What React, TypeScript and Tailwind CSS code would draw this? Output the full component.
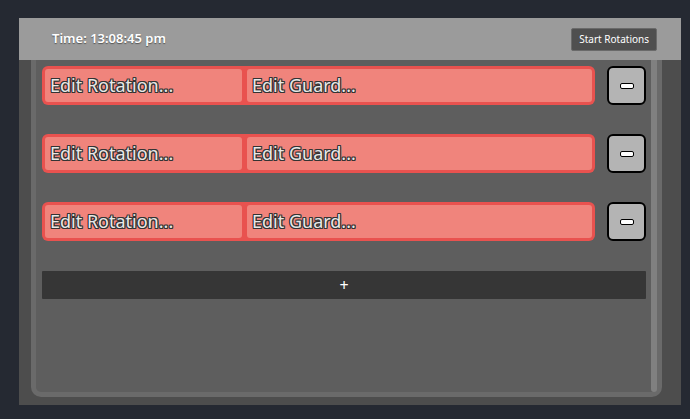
import React from 'react';

const outline =
  '[text-shadow:-1px_-1px_0_#333,1px_-1px_0_#333,-1px_1px_0_#333,1px_1px_0_#333,0_1px_0_#333,0_-1px_0_#333,1px_0_0_#333,-1px_0_0_#333]';

function RotationRow() {
  return (
    <div className="flex items-center gap-[12px]">
      <div className="flex h-[39px] flex-1 gap-[5px] rounded-[6px] bg-[#e9524f] p-[3px]">
        <div
          className={`flex w-[197px] items-center rounded-[3px] bg-[#f0847c] pl-[5px] text-[18px] text-[#e8e8e8] ${outline}`}
        >
          Edit Rotation...
        </div>
        <div
          className={`flex flex-1 items-center rounded-[3px] bg-[#f0847c] pl-[5px] text-[18px] text-[#e8e8e8] ${outline}`}
        >
          Edit Guard...
        </div>
      </div>
      <button className="flex h-[39px] w-[39px] items-center justify-center rounded-[6px] border-2 border-black bg-[#b4b4b4]">
        <span className="block h-[6px] w-[14px] rounded-[2px] border-[1.5px] border-black bg-white" />
      </button>
    </div>
  );
}

export default function App() {
  return (
    <div
      className="h-[419px] w-[690px] bg-[#252932] pl-[19px] pt-[18px]"
      style={{ fontFamily: '"Noto Sans", sans-serif' }}
    >
      <div className="flex h-[387px] w-[662px] flex-col bg-[#4d4d4d]">
        {/* Header */}
        <div className="flex h-[42px] items-center justify-between bg-[#9b9b9b] pl-[33px] pr-[24px]">
          <span className="text-[13px] font-semibold text-white [text-shadow:0_1px_1px_#555]">
            Time: 13:08:45 pm
          </span>
          <button className="flex h-[23px] items-center rounded-[2px] border border-[#6a6a6a] bg-[#4f4f4f] px-[7px] text-[10px] text-white">
            Start Rotations
          </button>
        </div>

        {/* Body */}
        <div className="flex-1 pb-[8px] pl-[12px] pr-[19px]">
          <div className="flex h-full rounded-b-[10px] border-[5px] border-t-0 border-[#6a6a6a] bg-[#5e5e5e]">
            <div className="flex flex-1 flex-col gap-[29px] pl-[6px] pr-[5px] pt-[6px]">
              <RotationRow />
              <RotationRow />
              <RotationRow />
              <button className="mt-[1px] flex h-[28px] items-center justify-center rounded-[1px] bg-[#363636] text-[16px] text-white">
                +
              </button>
            </div>
            <div className="w-[6px] rounded-b-[3px] bg-[#808080]" />
          </div>
        </div>
      </div>
    </div>
  );
}
